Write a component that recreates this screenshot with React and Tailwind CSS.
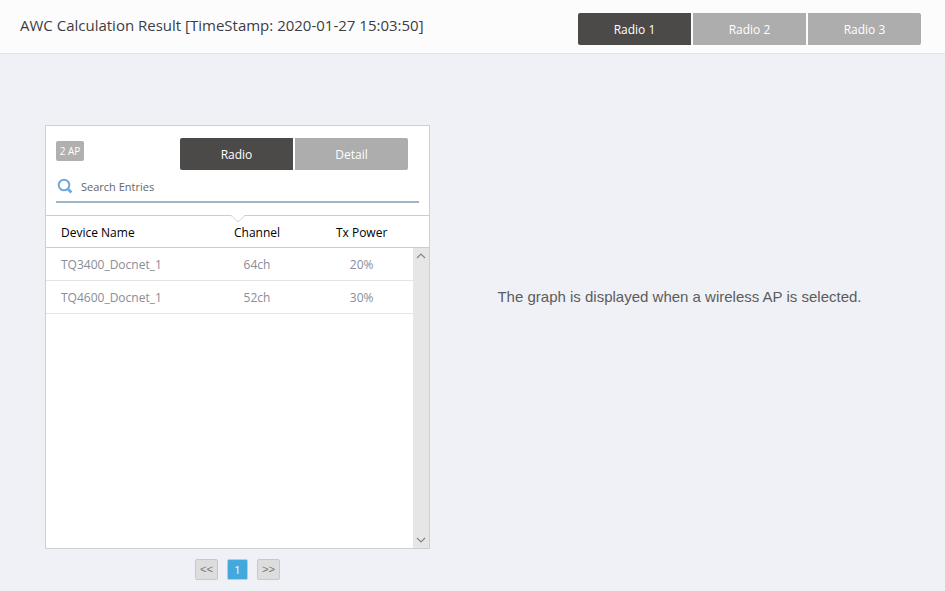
import { useState } from 'react'
import clsx from 'clsx'

const RADIOS = ['Radio 1', 'Radio 2', 'Radio 3']
const VIEWS = ['Radio', 'Detail']

const DEVICES = [
  { name: 'TQ3400_Docnet_1', channel: '64ch', power: '20%' },
  { name: 'TQ4600_Docnet_1', channel: '52ch', power: '30%' },
]

function ButtonGroup({ items, active, onSelect }) {
  return (
    <div className="flex gap-0.5 overflow-hidden rounded-xs">
      {items.map((item) => (
        <button
          key={item}
          type="button"
          onClick={() => onSelect(item)}
          className={clsx(
            'h-8 w-[113px] pt-px text-xs text-white',
            item === active ? 'bg-[#4b4a48]' : 'bg-[#adadad]',
          )}
        >
          {item}
        </button>
      ))}
    </div>
  )
}

function SearchIcon() {
  return (
    <svg width="16" height="16" viewBox="0 0 16 16" fill="none" stroke="#71a9dc" aria-hidden="true">
      <circle cx="7" cy="7" r="5.3" strokeWidth="2" />
      <path d="M10.8 10.8 14.4 14.4" strokeWidth="2.8" />
    </svg>
  )
}

function Arrow({ d }) {
  return (
    <svg width="16" height="16" viewBox="0 0 16 16" fill="none" stroke="#858585" strokeWidth="1.2">
      <path d={d} />
    </svg>
  )
}

// Table plus the scroll track, which starts below the header row
function DeviceTable({ devices }) {
  const head = 'h-8 border-b border-[#cccccc] pt-[3px] font-normal'
  const cell = 'h-[33px] border-b border-[#e4e4e8] pt-px'
  return (
    <div className="relative flex h-[333px] border-t border-[#cccccc]">
      <svg
        width="16"
        height="8"
        viewBox="0 0 16 8"
        className="absolute -top-px left-1/2 -ml-2"
        aria-hidden="true"
      >
        <path d="M1 0H15L8 7Z" fill="#fff" />
        <path d="M1 0.5 8 7 15 0.5" fill="none" stroke="#d4d4d4" />
      </svg>
      <div className="flex-1">
        <table className="w-full table-fixed border-separate border-spacing-0 text-xs">
          <thead className="text-black">
            <tr>
              <th className={clsx(head, 'w-[43%] pl-[15px] text-left')}>Device Name</th>
              <th className={clsx(head, 'w-[29%] text-center')}>Channel</th>
              <th className={clsx(head, 'text-center')}>Tx Power</th>
            </tr>
          </thead>
          <tbody className="text-[#8a8c99]">
            {devices.map((device) => (
              <tr key={device.name}>
                <td className={clsx(cell, 'pl-[15px]')}>{device.name}</td>
                <td className={clsx(cell, 'text-center')}>{device.channel}</td>
                <td className={clsx(cell, 'text-center')}>{device.power}</td>
              </tr>
            ))}
          </tbody>
        </table>
      </div>
      <div className="flex w-4 flex-col" aria-hidden="true">
        <div className="h-8 border-b border-[#cccccc]" />
        <div className="flex flex-1 flex-col justify-between bg-[#e6e6e6]">
          <Arrow d="M4 10 8 6 12 10" />
          <Arrow d="M4 6 8 10 12 6" />
        </div>
      </div>
    </div>
  )
}

function Pagination() {
  const base = 'flex h-[21px] items-center justify-center rounded-xs border border-[#c8c8cc] pt-px text-[11px]'
  const step = "w-[23px] bg-[#dddddd] font-['Liberation_Mono',monospace] text-[#777777]"
  return (
    <nav className="mt-[10px] flex justify-center gap-[9px]" aria-label="Pages">
      <button type="button" className={clsx(base, step)}>
        &lt;&lt;
      </button>
      <button type="button" className={clsx(base, 'w-[21px] bg-[#43a9dd] text-white')}>
        1
      </button>
      <button type="button" className={clsx(base, step)}>
        &gt;&gt;
      </button>
    </nav>
  )
}

export default function App() {
  const [radio, setRadio] = useState('Radio 1')
  const [view, setView] = useState('Radio')
  const [query, setQuery] = useState('')

  const visible = DEVICES.filter((d) => d.name.toLowerCase().includes(query.toLowerCase()))

  return (
    <div className="flex min-h-screen flex-col bg-[#f0f1f6] font-['Open_Sans',sans-serif]">
      <header className="flex items-start justify-between border-b border-[#e3e5ea] bg-[#fcfcfc] pt-[13px] pr-6 pb-2 pl-5">
        <h1 className="text-[15px] leading-6 text-[#3c3c46]">
          AWC Calculation Result [TimeStamp: 2020-01-27 15:03:50]
        </h1>
        <ButtonGroup items={RADIOS} active={radio} onSelect={setRadio} />
      </header>

      <main className="flex flex-1 pt-[71px] pr-4 pl-[45px]">
        <div className="w-[385px] shrink-0">
          <section className="border border-[#cfcfd3] bg-white">
            <div className="flex items-start justify-between pt-3 pr-[21px] pl-[10px]">
              <span className="mt-[3px] flex h-5 w-7 items-center justify-center rounded-xs bg-[#b0b0b0] pt-px text-[10px] text-white">
                2 AP
              </span>
              <ButtonGroup items={VIEWS} active={view} onSelect={setView} />
            </div>
            <label className="mx-[10px] mb-3 flex h-[33px] items-center gap-2 border-b-2 border-[#9fb6c9] pt-px pl-px">
              <SearchIcon />
              <input
                type="text"
                value={query}
                onChange={(e) => setQuery(e.target.value)}
                placeholder="Search Entries"
                aria-label="Search Entries"
                className="min-w-0 flex-1 pt-[3px] text-[11px] text-[#666666] outline-none placeholder:text-[#666666]"
              />
            </label>
            <DeviceTable devices={visible} />
          </section>
          <Pagination />
        </div>
        <p className="mt-40 flex-1 text-center font-['Liberation_Sans',sans-serif] text-[15px] leading-6 text-[#5c5c5c]">
          The graph is displayed when a wireless AP is selected.
        </p>
      </main>
    </div>
  )
}
